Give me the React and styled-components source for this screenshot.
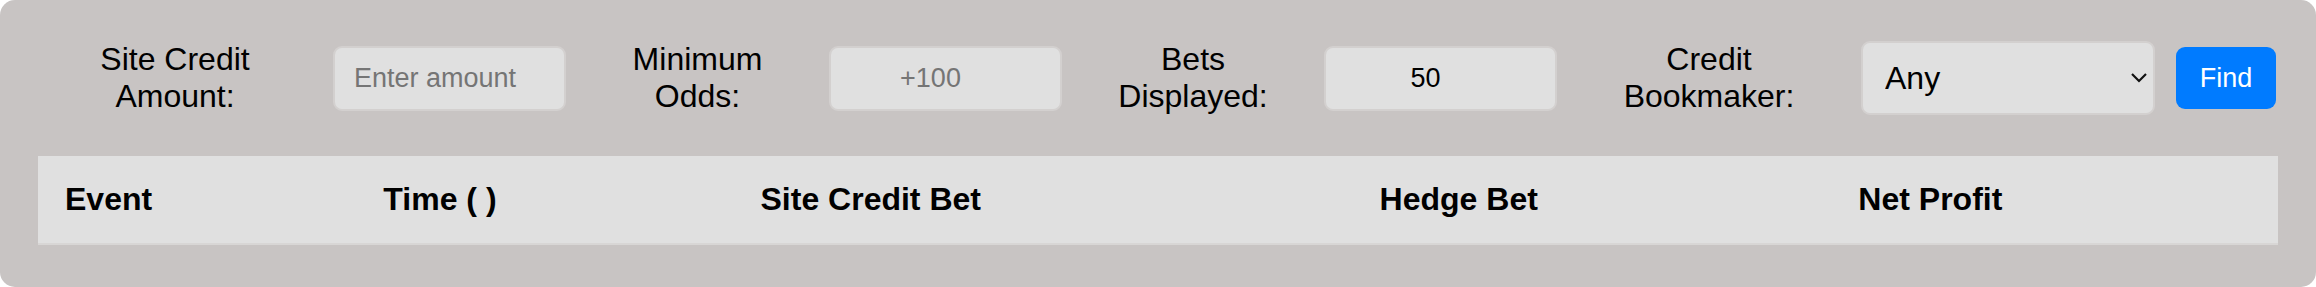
import React from 'react';
import styled, { createGlobalStyle } from 'styled-components';

const GlobalStyle = createGlobalStyle`
  body {
    margin: 0;
    background: #ffffff;
    font-family: "Liberation Sans", Arial, sans-serif;
  }
`;

const Panel = styled.div`
  box-sizing: border-box;
  width: 2316px;
  height: 287px;
  padding: 41px 38px 42px;
  background: #c8c4c3;
  border-radius: 15px;
  display: flex;
  flex-direction: column;
  gap: 41px;
`;

const Controls = styled.form`
  display: flex;
  align-items: center;
  gap: 21px;
  height: 74px;
  margin: 0;
`;

const Label = styled.label`
  width: ${props => props.$width}px;
  flex-shrink: 0;
  font-size: 32px;
  line-height: 37px;
  text-align: center;
  color: #000;
`;

const Input = styled.input`
  box-sizing: border-box;
  width: 233px;
  height: 65px;
  flex-shrink: 0;
  padding: ${props => (props.$center ? '0 30px 0 0' : '0 0 0 19px')};
  border: 2px solid #d3d0cf;
  border-radius: 9px;
  background: #e0e0e0;
  font-family: inherit;
  font-size: 27px;
  color: #000;
  text-align: ${props => (props.$center ? 'center' : 'left')};
  outline: none;

  &::placeholder {
    color: #757575;
  }
`;

const SelectWrap = styled.div`
  position: relative;
  width: 294px;
  height: 74px;
  flex-shrink: 0;
`;

const Select = styled.select`
  box-sizing: border-box;
  width: 100%;
  height: 100%;
  padding: 0 0 0 22px;
  border: 2px solid #d3d0cf;
  border-radius: 9px;
  background: #e0e0e0;
  font-family: inherit;
  font-size: 32px;
  color: #000;
  appearance: none;
  outline: none;
`;

const Chevron = styled.svg`
  position: absolute;
  right: 7px;
  top: 31px;
  pointer-events: none;
`;

const FindButton = styled.button`
  width: 100px;
  height: 62px;
  flex-shrink: 0;
  border: none;
  border-radius: 9px;
  background: #007bff;
  color: #fff;
  font-family: inherit;
  font-size: 27px;
  cursor: pointer;
`;

const Table = styled.table`
  width: 100%;
  border-collapse: collapse;
  background: #e0e0e0;
`;

const Th = styled.th`
  padding: 25px 27px;
  text-align: left;
  font-size: 32px;
  line-height: 37px;
  font-weight: bold;
  color: #000;
  border-bottom: 2px solid #d8d6d5;
`;

const columns = ['Event', 'Time ( )', 'Site Credit Bet', 'Hedge Bet', 'Net Profit'];

const App = () => (
  <>
    <GlobalStyle />
    <Panel>
      <Controls onSubmit={e => e.preventDefault()}>
        <Label $width={274}>Site Credit<br />Amount:</Label>
        <Input placeholder="Enter amount" />
        <Label $width={221}>Minimum<br />Odds:</Label>
        <Input $center placeholder="+100" />
        <Label $width={220}>Bets<br />Displayed:</Label>
        <Input $center defaultValue="50" />
        <Label $width={262}>Credit<br />Bookmaker:</Label>
        <SelectWrap>
          <Select defaultValue="any">
            <option value="any">Any</option>
          </Select>
          <Chevron width="18" height="11" viewBox="0 0 18 11">
            <path d="M2 2 L9 9 L16 2" fill="none" stroke="#111" strokeWidth="2.2" />
          </Chevron>
        </SelectWrap>
        <FindButton type="submit">Find</FindButton>
      </Controls>
      <Table>
        <thead>
          <tr>
            {columns.map(col => (
              <Th key={col}>{col}</Th>
            ))}
          </tr>
        </thead>
        <tbody />
      </Table>
    </Panel>
  </>
);

export default App;
